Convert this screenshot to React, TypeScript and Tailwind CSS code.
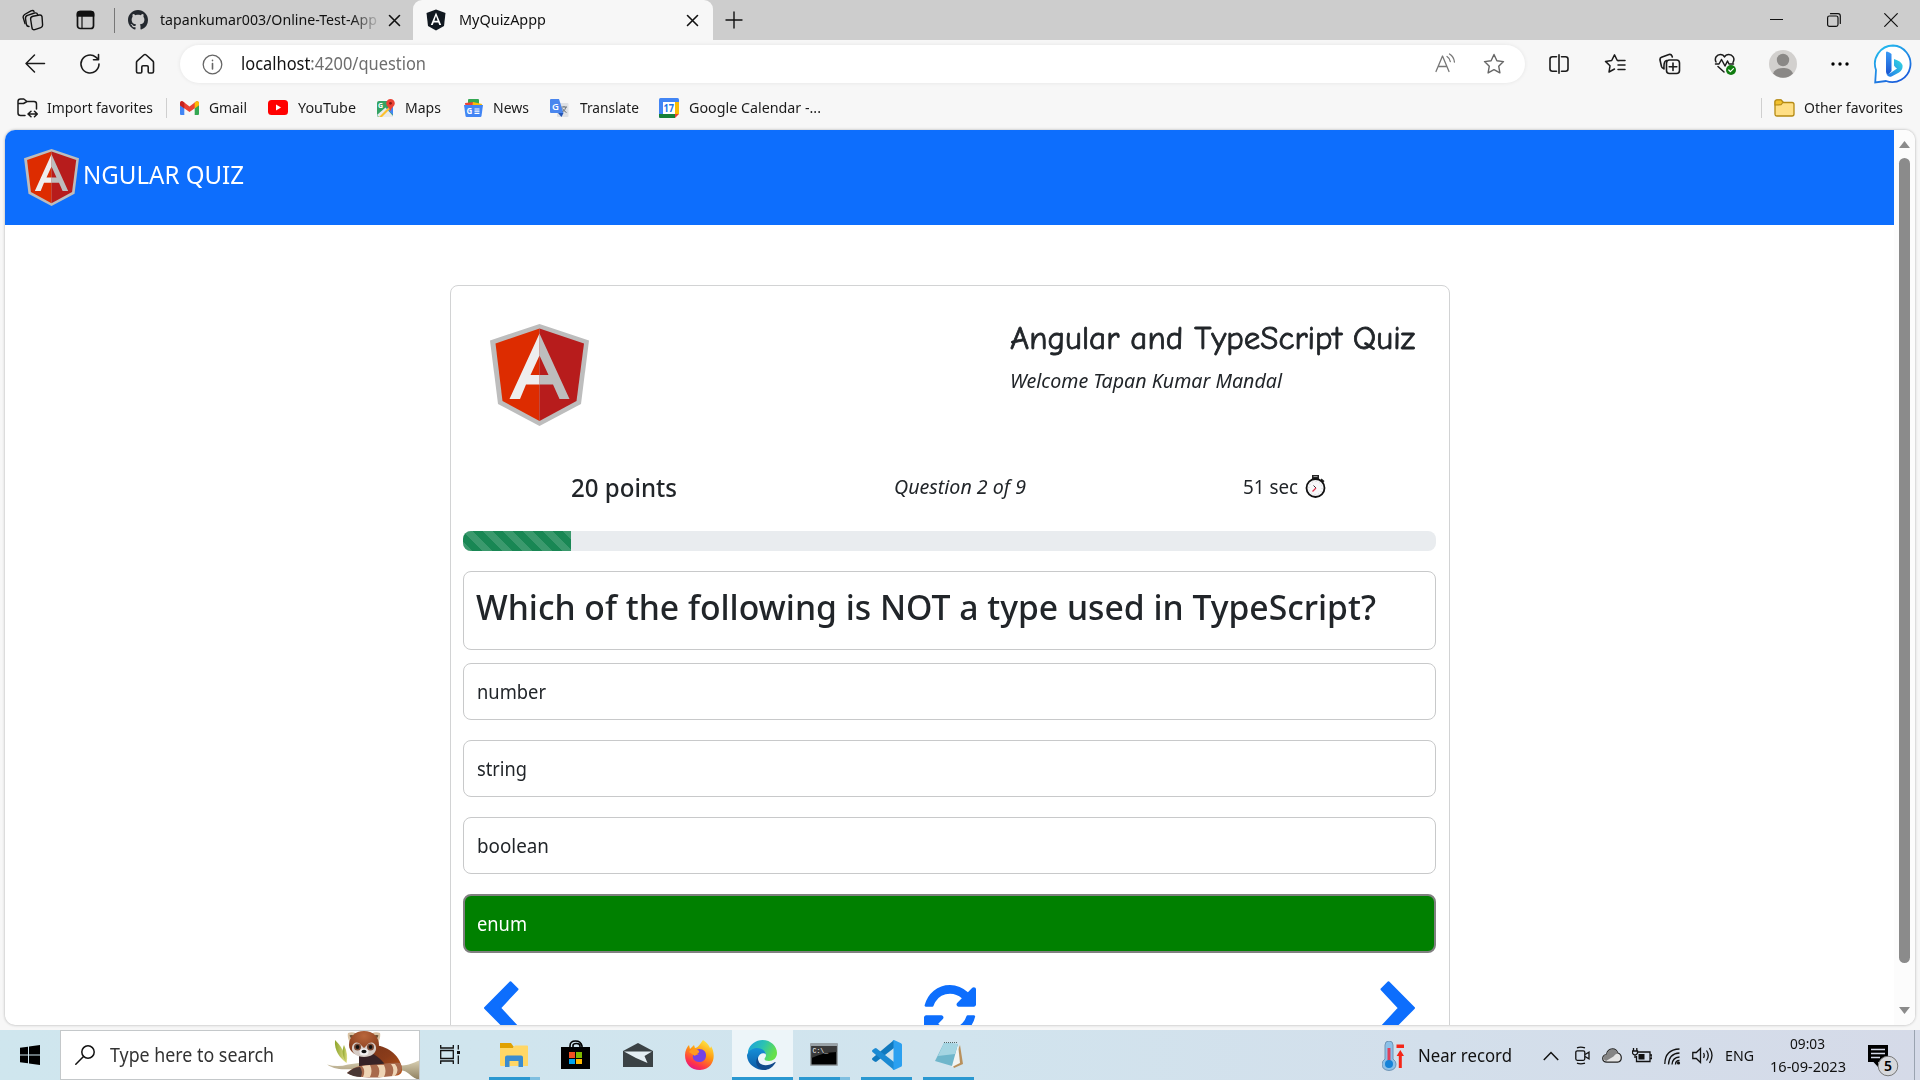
import { useLayoutEffect, useRef, type ReactNode } from "react";

/* A single line of text stretched to an exact advance width. */
function Fit({ w, className = "", children }: { w: number; className?: string; children: ReactNode }) {
  const ref = useRef<HTMLSpanElement>(null);
  useLayoutEffect(() => {
    const el = ref.current;
    if (!el) return;
    el.style.transform = "none";
    const natural = el.getBoundingClientRect().width;
    el.style.transform = `scaleX(${w / natural})`;
  }, [w]);
  return (
    <span className={`block shrink-0 ${className}`} style={{ width: w }}>
      <span ref={ref} className="inline-block origin-left whitespace-nowrap">
        {children}
      </span>
    </span>
  );
}

const line = { fill: "none", stroke: "currentColor", strokeLinecap: "round", strokeLinejoin: "round" } as const;

function AngularLogo({ className }: { className: string }) {
  return (
    <svg className={className} viewBox="0 0 99 102" preserveAspectRatio="none">
      <path d="M49.5 0 0 16.5 8 80 49.5 102 91 80 99 16.5Z" fill="#bdbdbd" />
      <path d="M49.5 4.5 5.5 19.5 12.5 77 49.5 97Z" fill="#dd2c00" />
      <path d="M49.5 4.5 94 19.5 86.500 77 49.5 97Z" fill="#b71c1c" />
      <path d="M49.5 9.500 19.500 75H30l6-14.500H49.500V51H40.500l9-19.500Z" fill="#eeeeee" />
      <path d="M49.500 9.500 79.500 75H69.500L63 60.500H49.500V51H58.500l-9-19.500Z" fill="#bdbdbd" />
    </svg>
  );
}

function TabStrip() {
  return (
    <div className="flex h-10 items-end bg-[#cdcdcd] text-[15px] leading-5 text-[#111]">
      <svg className="mb-[9px] ml-[22px] size-[22px] shrink-0" viewBox="0 0 22 22" {...line} strokeWidth="1.400">
        <path d="M11 7.200 17.500 6q2-.3 2.500 1.500l.6 8.500q0 2-1.800 2.600l-6 2q-2.300.6-2.800-1.600L8.600 10q-.2-2.200 2.400-2.800Z" />
        <path d="M7 17.500c-1.500 0-2.300-.8-2.600-2L3.500 9.500c-.2-1.700.6-2.700 2-3.200L12.500 4c1.600-.4 2.800.2 3.200 1.700" />
        <path d="M3 14.500 1.200 8.600C.9 7.300 1.400 6.400 2.600 5.500L9 1.800c1.500-.7 2.500-.4 3 .6" />
      </svg>
      <svg className="mb-[10px] ml-[32px] size-[20px] shrink-0" viewBox="0 0 20 20" {...line} strokeWidth="1.700">
        <rect x="1.500" y="1.500" width="16" height="17" rx="2.800" />
        <path d="M1.500 3.500q0-2 2.500-2h11q2.500 0 2.500 2V6h-16Z" fill="currentColor" />
        <path d="M6 6.500v12" strokeWidth="1.200" />
      </svg>
      <div className="mb-[7px] ml-[18px] h-[25px] w-px shrink-0 bg-[#777]" />
      <svg className="mb-[10px] ml-[13px] size-5 shrink-0" viewBox="0 0 16 16" fill="#24292f">
        <path d="M8 0C3.580 0 0 3.580 0 8c0 3.540 2.290 6.530 5.470 7.590.4.070.55-.17.55-.38 0-.19-.01-.82-.01-1.490-2.010.37-2.530-.49-2.690-.94-.09-.23-.48-.94-.82-1.130-.28-.15-.68-.52-.01-.53.63-.01 1.080.58 1.230.82.72 1.210 1.870.87 2.330.66.070-.52.28-.87.51-1.070-1.780-.2-3.640-.89-3.640-3.950 0-.87.31-1.590.82-2.150-.08-.2-.36-1.020.08-2.120 0 0 .67-.21 2.200.82.64-.18 1.320-.27 2-.27s1.360.09 2 .27c1.530-1.040 2.200-.82 2.200-.82.44 1.100.16 1.920.08 2.120.51.56.82 1.270.82 2.150 0 3.070-1.870 3.750-3.650 3.950.29.25.54.73.54 1.480 0 1.070-.01 1.930-.01 2.200 0 .21.15.46.55.38A8.010 8.010 0 0 0 16 8c0-4.420-3.580-8-8-8Z" />
      </svg>
      <div className="mb-[11px] ml-3 [mask-image:linear-gradient(to_right,#000_88%,rgba(0,0,0,0.15))]">
        <Fit w={217}>tapankumar003/Online-Test-App</Fit>
      </div>
      <svg className="mb-[13px] ml-[11px] size-[13px] shrink-0" viewBox="0 0 13 13" {...line} strokeWidth="1.600">
        <path d="m1.500 1.500 10 10m0-10-10 10" />
      </svg>
      <div className="ml-[12px] flex h-10 w-[300px] shrink-0 items-end rounded-t-[9px] bg-[#f7f7f7]">
        <svg className="mb-[9px] ml-[13px] h-[22px] w-[20px] shrink-0" viewBox="0 0 20 22">
          <path d="m10 .5 9.500 3.500-1.500 13L10 21.500 2 17 .5 4Z" fill="#111820" />
          <path d="M10 3.500 4.800 16h1.900l1-2.600h4.600l1 2.600h1.900ZM10 7l1.600 4.700H8.400Z" fill="#fff" fillRule="evenodd" />
        </svg>
        <Fit w={87} className="mb-[11px] ml-[13px]">MyQuizAppp</Fit>
        <svg className="mb-[13px] ml-[140px] size-[13px] shrink-0" viewBox="0 0 13 13" {...line} strokeWidth="1.600">
          <path d="m1.500 1.500 10 10m0-10-10 10" />
        </svg>
      </div>
      <svg className="mb-[11px] ml-[12px] size-[18px] shrink-0" viewBox="0 0 18 18" {...line} strokeWidth="1.400">
        <path d="M9 1v16M1 9h16" />
      </svg>
      <div className="grow" />
      <svg className="mb-[14px] h-[13px] w-[13px] shrink-0" viewBox="0 0 13 13" {...line} strokeWidth="1.200">
        <path d="M0 6.500h13" />
      </svg>
      <svg className="mb-[13px] ml-[44px] size-[14px] shrink-0" viewBox="0 0 14 14" {...line} strokeWidth="1.200">
        <rect x=".6" y="3" width="10.400" height="10.400" rx="1.800" />
        <path d="M3.500.7H11q2.300 0 2.300 2.300v7.500" />
      </svg>
      <svg className="mb-[13px] ml-[43px] mr-[22px] size-[14px] shrink-0" viewBox="0 0 14 14" {...line} strokeWidth="1.200">
        <path d="m.7.7 12.600 12.600m0-12.600L.7 13.300" />
      </svg>
    </div>
  );
}

function Toolbar() {
  return (
    <div className="flex h-[48px] items-center text-[#1b1b1b]">
      <svg className="ml-[24px] size-[22px] shrink-0" viewBox="0 0 22 22" {...line} strokeWidth="1.500">
        <path d="M20.500 10.500H2m8.500-8.500L2 10.500 10.500 19" />
      </svg>
      <svg className="ml-[33px] size-[22px] shrink-0" viewBox="0 0 22 22" {...line} strokeWidth="1.600">
        <path d="M20 11a9 9 0 1 1-3.200-6.900L19.500 6.500M19.500 1.500v5.200h-5" />
      </svg>
      <svg className="ml-[33px] size-[22px] shrink-0" viewBox="0 0 22 22" {...line} strokeWidth="1.600">
        <path d="M2.500 9.500Q2.500 8.500 3.300 7.800L9.800 2q1.200-1 2.400 0l6.500 5.800q.8.700.8 1.700v9q0 1.500-1.500 1.500h-2.500q-1.300 0-1.300-1.300V14q0-1.200-1.200-1.200H9Q7.800 12.800 7.800 14v4.700Q7.800 20 6.500 20H4q-1.500 0-1.500-1.500Z" />
      </svg>
      <div className="ml-[24px] flex h-[38px] w-[1345px] shrink-0 items-center rounded-full bg-white shadow-[0_0_4px_rgba(0,0,0,0.08)]">
        <svg className="ml-[22px] size-[21px] shrink-0 text-[#666]" viewBox="0 0 21 21" {...line} strokeWidth="1.300">
          <circle cx="10.500" cy="10.500" r="9.300" />
          <path d="M10.500 9.500v5.500M10.500 6.200v.4" strokeWidth="1.600" />
        </svg>
        <Fit w={185} className="mb-[2px] ml-[18px] text-[18px] leading-6 text-[#6e6e6e]">
          <span className="text-[#111]">localhost</span>:4200/question
        </Fit>
        <div className="grow" />
        <svg className="mb-[2px] h-[20px] w-[21px] shrink-0 text-[#777]" viewBox="0 0 21 20" {...line} strokeWidth="1.300">
          <path d="m1 18.500L7.500 3 14 18.500M3.300 13.500h8.400M12 3.500c2 1.200 3 2.800 3.300 5M14.500 1c3 1.800 4.600 4.400 4.900 8" />
        </svg>
        <svg className="ml-[27px] mr-[20px] size-[22px] shrink-0 text-[#666]" viewBox="0 0 22 22" {...line} strokeWidth="1.400">
          <path d="m11 1.500 2.900 6.200 6.600.9-4.800 4.600 1.200 6.700-5.900-3.200-5.900 3.200 1.200-6.700L1.500 8.600l6.600-.9Z" />
        </svg>
      </div>
      <svg className="ml-[24px] h-[20px] w-[20px] shrink-0" viewBox="0 0 20 20" {...line} strokeWidth="1.600">
        <path d="M7.500 2.800h-4Q1 2.800 1 5.300v9.400q0 2.500 2.500 2.500h4M12.500 2.800h4Q19 2.800 19 5.300v9.400q0 2.500-2.500 2.500h-4M10 .8v18.400" />
      </svg>
      <svg className="ml-[35px] size-[22px] shrink-0" viewBox="0 0 22 22" {...line} strokeWidth="1.500">
        <path d="M15 7.700 13.300 7.500 10.500 1.800 7.700 7.500l-6.200.9L6 12.800 5 19l5.500-3M13.500 7.500H21M14 12h7M14 16.500h7" />
      </svg>
      <svg className="ml-[33px] size-[22px] shrink-0" viewBox="0 0 22 22" {...line} strokeWidth="1.600">
        <rect x="7.500" y="7" width="13" height="13.500" rx="3" />
        <path d="M14 10v7.500M10.200 13.800h7.600M4.500 15.500Q3 15 2.500 13.500L1 7Q.7 5 2.500 4.300L10 1.500q2.200-.5 3 1.500l.3 1M7.500 7.500Q4.500 8 5 16" />
      </svg>
      <svg className="ml-[33px] size-[22px] shrink-0" viewBox="0 0 22 22" {...line} strokeWidth="1.500">
        <path d="M2 9C0 5 3 1.500 6.300 1.500c2 0 3.600 1 4.200 2.500.7-1.500 2.400-2.500 4.300-2.500C18.300 1.500 21.500 5 19 9.500M1.500 11H5l2.500-4.500L11 13l2.500-5L15 11h4.500M4 13.500l6 5.500" />
        <circle cx="17" cy="17" r="5" fill="#107c10" stroke="none" />
        <path d="m14.800 17 1.600 1.600 3-3" stroke="#fff" strokeWidth="1.200" />
      </svg>
      <svg className="ml-[33px] size-[28px] shrink-0" viewBox="0 0 28 28">
        <circle cx="14" cy="14" r="14" fill="#d2d0ce" />
        <circle cx="14" cy="10" r="6.200" fill="#8a8886" />
        <path d="M4 23.500C6 19 10 18 14 18s8 1 10 5.500A14 14 0 0 1 4 23.500Z" fill="#8a8886" />
      </svg>
      <svg className="ml-[34px] h-[4px] w-[18px] shrink-0" viewBox="0 0 18 4">
        <circle cx="2" cy="2" r="1.700" />
        <circle cx="9" cy="2" r="1.700" />
        <circle cx="16" cy="2" r="1.700" />
      </svg>
      <svg className="ml-[24px] size-[40px] shrink-0" viewBox="0 0 40 40">
        <defs>
          <linearGradient id="bingRing" x1="0" y1="0" x2=".6" y2="1">
            <stop offset="0" stopColor="#25c5f0" />
            <stop offset="1" stopColor="#1b5fdc" />
          </linearGradient>
          <linearGradient id="bingStem" x1="0" y1="0" x2="0" y2="1">
            <stop offset="0" stopColor="#3a9cf6" />
            <stop offset="1" stopColor="#1a55d0" />
          </linearGradient>
          <linearGradient id="bingBowl" x1="0" y1="1" x2="1" y2="0">
            <stop offset="0" stopColor="#2277ea" />
            <stop offset="1" stopColor="#35dbe0" />
          </linearGradient>
        </defs>
        <path d="M20 1.500A18.300 18.300 0 1 1 13 37L2.200 38.500 3 26A18.300 18.300 0 0 1 20 1.500Z" fill="#fff" stroke="url(#bingRing)" strokeWidth="1.800" />
        <path d="M14 7.500q3.500 1 4.500 2.500V27q-2.500 3.500-4.500 3.500-1-1.500-1-3V8.500q0-1 1-1Z" fill="url(#bingStem)" />
        <path d="M21 15q7 2 8.500 6 .8 5-3.500 7.500l-7 3.800q-4 1.700-5.500-2.300 1.500.5 4-1l6.500-4.500q-2-1-3-3Z" fill="url(#bingBowl)" />
      </svg>
    </div>
  );
}

function GmailIcon() {
  return (
    <svg className="h-[14px] w-[19px]" viewBox="0 0 19 14">
      <path d="M0 2v11q0 1 1 1h3.300V5Z" fill="#4285f4" />
      <path d="M19 2v11q0 1-1 1h-3.300V5Z" fill="#34a853" />
      <path d="M0 2Q.5-.5 3 .5l6.500 5 6.500-5Q18.500-.5 19 2v2.200L9.500 11 0 4.200Z" fill="#ea4335" />
      <path d="M0 4.200V2Q.3 0 2 0l2.300 1.500v6Z" fill="#c5221f" />
      <path d="M19 4.200V2Q18.700 0 17 0l-2.300 1.500v6Z" fill="#fbbc04" />
    </svg>
  );
}
function YouTubeIcon() {
  return (
    <svg className="h-[15px] w-[20px]" viewBox="0 0 20 15">
      <rect width="20" height="15" rx="3.500" fill="#f00" />
      <path d="m8 4.500 5 3-5 3Z" fill="#fff" />
    </svg>
  );
}
function MapsIcon() {
  return (
    <svg className="h-[18px] w-[18px]" viewBox="0 0 18 18">
      <rect y="2" width="16" height="16" rx="2" fill="#34a363" />
      <path d="m0 16 8.500-7.500L16 17v1H2Z" fill="#e8eaed" />
      <path d="m9.500 9.500 6.500 6.500V7Z" fill="#4285f4" />
      <path d="M2 18 16 4v3L5 18Z" fill="#fbc02d" />
      <text x="1" y="9" fontSize="7" fill="#fff" fontFamily="Open Sans" fontWeight="700">G</text>
      <path d="M13.500 0a4.300 4.300 0 0 1 4.300 4.300c0 3-3.300 4-4.300 8-1-4-4.300-5-4.300-8A4.300 4.300 0 0 1 13.500 0Z" fill="#ea4335" />
      <circle cx="13.500" cy="4.300" r="1.400" fill="#8c1b13" />
    </svg>
  );
}
function NewsIcon() {
  return (
    <svg className="h-[18px] w-[19px]" viewBox="0 0 19 18">
      <rect x="4" width="11" height="8" rx="1" fill="#34a853" />
      <path d="m1 4 9-1 1 6-9 2Z" fill="#ea4335" />
      <path d="m9 3 9 2-1 5-9-1Z" fill="#fbbc04" />
      <path d="M0 6h19l-1.500 11q-.2 1-1.200 1H2.700q-1 0-1.200-1Z" fill="#4285f4" />
      <text x="2.500" y="15" fontSize="8" fill="#fff" fontFamily="Open Sans" fontWeight="700">G</text>
      <path d="M10.500 10h5M10.500 12.200h5M10.500 14.400h5" stroke="#fff" strokeWidth="1.200" />
    </svg>
  );
}
function TranslateIcon() {
  return (
    <svg className="h-[18px] w-[19px]" viewBox="0 0 19 18">
      <rect x="7" y="4" width="11.500" height="14" rx="1" fill="#dfe1e5" />
      <path d="M1 0h8l4.500 14H1q-1 0-1-1V1q0-1 1-1Z" fill="#4a86ee" />
      <path d="m8 14 3.500 4 2-4Z" fill="#2456b5" />
      <text x="2" y="10.500" fontSize="9.500" fill="#fff" fontFamily="Open Sans" fontWeight="600">G</text>
      <path d="M11.500 8h5.500M14 7v1M16 8q-.8 3-3.500 5M12.500 9.500q1.500 3 4 4" fill="none" stroke="#687178" />
    </svg>
  );
}
function CalendarIcon() {
  return (
    <svg className="size-[20px]" viewBox="0 0 20 20">
      <path d="M1.500 0h17Q20 0 20 1.500V15l-5 5H1.500Q0 20 0 18.500v-17Q0 0 1.500 0Z" fill="#4285f4" />
      <path d="M16 4h4v12h-4Z" fill="#fbbc04" />
      <path d="M0 16h16v4H1.500Q0 20 0 18.500Z" fill="#188038" />
      <path d="M16 16h4l-4 4Z" fill="#ea4335" />
      <path d="M4 4h12v12H4Z" fill="#fff" />
      <text x="4.600" y="14" fontSize="10" fill="#1a73e8" fontFamily="Open Sans" fontWeight="700" textLength="10.500" lengthAdjust="spacingAndGlyphs">17</text>
    </svg>
  );
}

function FavoritesBar() {
  return (
    <div className="flex h-[42px] items-center pb-[3px] text-[15px] leading-5 text-[#1b1b1b]">
      <svg className="ml-[17px] size-[21px] shrink-0" viewBox="0 0 21 21" {...line} strokeWidth="1.500">
        <path d="M8 18.500H3.500Q1 18.500 1 16V4.500Q1 2 3.500 2h3.300L10 4.500h7q2.500 0 2.500 2.500v5M1 6.500h5.500L10 4.500M11.500 17h8.500m-6-2.800L11 17l3 2.800m3.500-5.600L20.300 17l-2.800 2.800" />
      </svg>
      <Fit w={106} className="-mt-px ml-[9px]">Import favorites</Fit>
      <div className="ml-[13px] h-5 w-px shrink-0 bg-[#cfcfcf]" />
      <div className="ml-[13px] flex shrink-0 items-center gap-[10px]"><GmailIcon /><Fit w={38} className="-mt-px">Gmail</Fit></div>
      <div className="ml-[21px] flex shrink-0 items-center gap-[10px]"><YouTubeIcon /><Fit w={58} className="-mt-px">YouTube</Fit></div>
      <div className="ml-[21px] flex shrink-0 items-center gap-[10px]"><MapsIcon /><Fit w={36} className="-mt-px">Maps</Fit></div>
      <div className="ml-[23px] flex shrink-0 items-center gap-[10px]"><NewsIcon /><Fit w={36} className="-mt-px">News</Fit></div>
      <div className="ml-[21px] flex shrink-0 items-center gap-[11px]"><TranslateIcon /><Fit w={59} className="-mt-px">Translate</Fit></div>
      <div className="ml-[20px] flex shrink-0 items-center gap-[10px]"><CalendarIcon /><Fit w={132} className="-mt-px">Google Calendar -...</Fit></div>
      <div className="grow" />
      <div className="h-5 w-px bg-[#cfcfcf]" />
      <svg className="ml-[12px] h-[18px] w-[21px] shrink-0" viewBox="0 0 21 18">
        <path d="M1 3q0-2 2-2h4l2.500 2.500H18q2 0 2 2V15q0 2-2 2H3q-2 0-2-2Z" fill="#ffdf85" stroke="#b58a12" strokeWidth="1.300" />
        <path d="M1 6V3q0-2 2-2h4l2 2.300L7 5.800Z" fill="#f2c12e" stroke="#b58a12" strokeWidth="1.100" />
      </svg>
      <Fit w={99} className="-mt-px ml-[9px] mr-[17px]">Other favorites</Fit>
    </div>
  );
}

function Stopwatch() {
  return (
    <svg className="h-[23px] w-[21px] shrink-0" viewBox="0 0 21 23">
      <path d="M7 0h7v4H7ZM16.500 3.500l3 2.500-1.500 2-3-2.500Z" fill="#222" />
      <path d="M8.500 1.500h4" stroke="#999" />
      <circle cx="10.500" cy="13" r="9" fill="#f7f7f9" stroke="#111" strokeWidth="1.800" />
      <circle cx="10.500" cy="13" r="6.600" fill="none" stroke="#c9c9c9" strokeDasharray=".8 2.650" />
      <path d="m8.500 10.500 2.500 2.500" stroke="#333" />
      <path d="m11 13-3.500 3.500" stroke="#e0304a" strokeWidth="1.200" />
    </svg>
  );
}

const options = [
  { label: "number", width: 69 },
  { label: "string", width: 50 },
  { label: "boolean", width: 72 },
];

function QuizCard() {
  return (
    <div className="ml-[445px] mt-[60px] h-[800px] w-[1000px] rounded-[8px] border border-[#d2d3d4] pl-3 pr-[13px] text-[#212529]">
      <div className="flex h-[165px] justify-between">
        <AngularLogo className="ml-[27px] mt-[38px] h-[102px] w-[99px]" />
        <div className="mr-[21px] mt-[30px]">
          <Fit w={405} className="font-['Comic_Sans_MS','Comic_Neue','Noto_Sans'] text-[33px] font-medium leading-[44px] [-webkit-text-stroke:0.8px_#212529]">
            Angular and TypeScript Quiz
          </Fit>
          <Fit w={272} className="mt-[6px] text-[20px] italic leading-[30px]">Welcome Tapan Kumar Mandal</Fit>
        </div>
      </div>
      <div className="flex h-[80px] items-start pt-[17px] leading-[38px]">
        <Fit w={106} className="ml-[108px] text-[25px] font-medium">20 points</Fit>
        <Fit w={132} className="ml-[217px] text-[20px] italic">Question 2 of 9</Fit>
        <Fit w={55} className="ml-[217px] text-[20px]">51 sec</Fit>
        <div className="ml-[7px] mt-[7px]"><Stopwatch /></div>
      </div>
      <div className="flex h-5 overflow-hidden rounded-[8px] bg-[#e9ecef]">
        <div className="w-[108px] bg-[#198754] bg-[linear-gradient(45deg,rgba(255,255,255,0.15)_25%,transparent_25%,transparent_50%,rgba(255,255,255,0.15)_50%,rgba(255,255,255,0.15)_75%,transparent_75%,transparent)] bg-[length:20px_20px]" />
      </div>
      <div className="mt-5 h-[79px] rounded-[8px] border border-[#c8c9ca] pl-[12px] pt-[12px]">
        <Fit w={900} className="text-[35px] font-medium leading-[46px]">
          Which of the following is NOT a type used in TypeScript?
        </Fit>
      </div>
      <div className="mt-[13px] flex flex-col gap-5">
        {options.map((o) => (
          <div key={o.label} className="flex h-[57px] items-center rounded-[8px] border border-[#c8c9ca] pl-[13px]">
            <Fit w={o.width} className="text-[20px] leading-[30px]">{o.label}</Fit>
          </div>
        ))}
        <div className="flex h-[59px] items-center rounded-[8px] border-2 border-[#808080] bg-[#008000] pl-[12px]">
          <Fit w={50} className="text-[20px] leading-[30px] text-white">enum</Fit>
        </div>
      </div>
      <div className="mt-[28px] flex items-start justify-between pl-[20px] pr-[20px] text-[#0d6efd]">
        <svg className="h-[54px] w-[36px]" viewBox="0 0 36 54" fill="currentColor" stroke="currentColor" strokeWidth="2" strokeLinejoin="round">
          <path d="M27.500 1.200 2 27l25.500 25.800 7-7L17 27 34.500 8.200Z" />
        </svg>
        <svg className="mt-[4px] size-[52px]" viewBox="0 128 1536 1536" fill="currentColor">
          <path d="M1511 1056q0 5-1 7-64 268-268 434.500t-478 166.500q-146 0-282.500-55t-243.500-157l-129 129q-19 19-45 19t-45-19-19-45v-448q0-26 19-45t45-19h448q26 0 45 19t19 45-19 45l-137 137q71 66 161 102t187 36q134 0 250-65t186-179q11-17 53-117 8-23 30-23h192q13 0 22.500 9.500t9.500 22.500zm25-800v448q0 26-19 45t-45 19h-448q-26 0-45-19t-19-45 19-45l138-138q-148-137-349-137-134 0-250 65t-186 179q-11 17-53 117-8 23-30 23h-199q-13 0-22.500-9.500t-9.500-22.500v-7q65-268 270-434.500t480-166.500q146 0 284 55.500t245 156.500l130-129q19-19 45-19t45 19 19 45z" />
        </svg>
        <svg className="h-[54px] w-[36px]" viewBox="0 0 36 54" fill="currentColor" stroke="currentColor" strokeWidth="2" strokeLinejoin="round">
          <path d="M8.500 1.200 34 27 8.500 52.800l-7-7L19 27 1.500 8.200Z" />
        </svg>
      </div>
    </div>
  );
}

function PageView() {
  return (
    <div className="ml-[5px] flex h-[895px] w-[1910px] overflow-hidden rounded-[10px] bg-white shadow-[0_0_3px_rgba(0,0,0,0.3)]">
      <div className="w-[1889px] shrink-0 overflow-hidden">
        <div className="flex h-[95px] items-center bg-[#0d6efd]">
          <AngularLogo className="ml-[19px] h-[57px] w-[55px]" />
          <Fit w={161} className="mb-[7px] ml-[4px] text-[25px] leading-[38px] text-white">NGULAR QUIZ</Fit>
        </div>
        <QuizCard />
      </div>
      <div className="flex w-[21px] flex-col items-center bg-[#fcfcfc] pr-px">
        <svg className="mt-[11px] h-[7px] w-[11px]" viewBox="0 0 11 7"><path d="M0 7 5.500 0 11 7Z" fill="#8b8b8b" /></svg>
        <div className="mt-[10px] h-[805px] w-[11px] rounded-full bg-[#8b8b8b]" />
        <svg className="mt-[44px] h-[7px] w-[11px]" viewBox="0 0 11 7"><path d="m0 0 5.500 7L11 0Z" fill="#8b8b8b" /></svg>
      </div>
    </div>
  );
}

function RedPanda() {
  return (
    <svg className="h-[48px] w-[92px] shrink-0" viewBox="0 0 92 48">
      <defs>
        <linearGradient id="fur" x1="0" y1="0" x2="1" y2="1">
          <stop offset="0" stopColor="#7a3418" />
          <stop offset=".5" stopColor="#8a3c1a" />
          <stop offset="1" stopColor="#bd5516" />
        </linearGradient>
        <radialGradient id="face" cx=".5" cy=".2" r=".8">
          <stop offset="0" stopColor="#b9663b" />
          <stop offset="1" stopColor="#7c3416" />
        </radialGradient>
        <linearGradient id="branch" x1="0" y1="0" x2="0" y2="1">
          <stop offset="0" stopColor="#d8cfb2" />
          <stop offset="1" stopColor="#8f8060" />
        </linearGradient>
        <linearGradient id="leaf" x1="0" y1="0" x2="1" y2="0">
          <stop offset="0" stopColor="#8ea52c" />
          <stop offset="1" stopColor="#e3e08a" />
        </linearGradient>
      </defs>
      <path d="M0 33.500c7 2 14 2 21 0l22-3 32 4c6 0 12-3 17-5v19c-8-1-10-9-18-9l-40-1c-12-1-24 2-34-5Z" fill="url(#branch)" />
      <path d="M8 9c6 6 10 12 11.500 23C13 27 7 20 8 9Z" fill="url(#leaf)" />
      <path d="M17 14c3 6 4 12 2.500 18-4-6-5-12-2.500-18Z" fill="url(#leaf)" />
      <path d="M48 14c14 2 26 11 27 25 0 6-8 7-16 5L38 36C34 30 35 22 48 14Z" fill="url(#fur)" />
      <path d="M32 23c10-5 20 2 27 12l-3 6-24-6Z" fill="#372226" />
      <path d="M20 42c6-6 14-8 22-8 12 0 22-3 31-2 4 4 1 12-7 13-14 2-34 3-46-3Z" fill="#a8694c" />
      <path d="M35 35q4 5 1 11h7q3-6 0-12ZM50 34q4 5 1 12h6q3-6 0-12ZM64 33q4 5 1 12h3q5-6 0-12Z" fill="#eed4b5" />
      <path d="M20 42c5-4 8-6 13-6q3 4 1 10-8 0-14-4Z" fill="#4a3835" />
      <path d="M21 2c5-2 9 0 11 4l-6 8c-4-2-6-8-5-12ZM53 2c-5-2-9 0-11 4l6 8c4-2 6-8 5-12Z" fill="#d9c3a4" />
      <path d="M22.500 4.500c3-1 5 0 7 2l-4 4ZM51.500 4.500c-3-1-5 0-7 2l4 4Z" fill="#6b5238" />
      <path d="M37 0c9 0 15 6 15 14 0 7-7 11-15 11s-15-4-15-11C22 6 28 0 37 0Z" fill="url(#face)" />
      <path d="M25 16c1-5 6-6 9-2l3 3 3-3c3-4 8-3 9 2 1 6-5 10-12 10s-13-4-12-10Z" fill="#d6ccc6" />
      <circle cx="30.500" cy="16" r="3.500" fill="#7b4a35" />
      <circle cx="43.500" cy="16" r="3.500" fill="#7b4a35" />
      <circle cx="30.500" cy="16" r="1.900" fill="#111" />
      <circle cx="43.500" cy="16" r="1.900" fill="#111" />
      <ellipse cx="37" cy="21" rx="4.500" ry="3.500" fill="#f1eeee" />
      <ellipse cx="37" cy="20.500" rx="2.600" ry="1.800" fill="#111" />
    </svg>
  );
}

const apps: { key: string; strip: string; cell: string; tail?: boolean; running: boolean; icon: ReactNode }[] = [
  {
    key: "explorer", cell: "ml-[29px] w-[51px]", strip: "w-[41px]", tail: true, running: true,
    icon: (
      <svg className="mr-[2px] h-[24px] w-[28px]" viewBox="0 0 28 24">
        <path d="M0 0h11l2.500 3.500V8H0Z" fill="#e0a100" />
        <path d="M0 5h13l2-2.500h12q1 0 1 1V23H1q-1 0-1-1Z" fill="#ffd766" />
        <path d="M5 24V14.500q0-2 2-2h14q2 0 2 2V24h-4.500v-6h-9v6Z" fill="#3a8cd0" />
      </svg>
    ),
  },
  {
    key: "store", cell: "ml-[10px] w-[51px]", strip: "", running: false,
    icon: (
      <svg className="h-[29px] w-[29px]" viewBox="0 0 29 29">
        <path d="M9 10V6q0-5 5.500-5T21 6v4M12 7V5.500q0-2 3.500-2T19 6v3" fill="none" stroke="#000" strokeWidth="1.600" />
        <path d="M0 7h29v22H0Z" />
        <path d="M8 12h6v6H8Z" fill="#f25022" /><path d="M15 12h6v6h-6Z" fill="#7fba00" />
        <path d="M8 19h6v5H8Z" fill="#00a4ef" /><path d="M15 19h6v5h-6Z" fill="#ffb900" />
      </svg>
    ),
  },
  {
    key: "mail", cell: "ml-[11px] w-[51px]", strip: "", running: false,
    icon: (
      <svg className="h-[24px] w-[30px]" viewBox="0 0 30 24">
        <path d="M0 8 15 0l15 8v16H0Z" fill="#3b4245" />
        <path d="m1 8.500 28 0-7.500 4.500 3 7L13 15Z" fill="#e4eef3" />
      </svg>
    ),
  },
  {
    key: "firefox", cell: "ml-[11px] w-[51px]", strip: "", running: false,
    icon: (
      <svg className="h-[30px] w-[29px]" viewBox="0 0 29 30">
        <defs>
          <linearGradient id="fox" x1=".8" y1="0" x2=".3" y2="1">
            <stop offset="0" stopColor="#fff04a" /><stop offset=".45" stopColor="#ff980e" />
            <stop offset=".8" stopColor="#ff3647" /><stop offset="1" stopColor="#e31587" />
          </linearGradient>
        </defs>
        <path d="M18 0c4 3 6 5 7 8 1-.5 1-1.500 1-2 5 8 4 23-11 24C6 30 0 24 0 15c0-4 2-8 4-10l1 4 4-4 1 3c3 0 5-4 8-8Z" fill="url(#fox)" />
        <path d="M14.500 9c4 0 7 3 6.500 7-.5 4-3 6-7 6-4 0-7-3-6-7h6q-3-1-5-3 2-3 5.500-3Z" fill="#7542e5" />
        <path d="M4 12c3-4 7-4 10-1 1 2-3 3-4 5Z" fill="#ff9a1f" />
      </svg>
    ),
  },
  {
    key: "edge", cell: "ml-[7px] w-[61px] bg-[#edf5f9]", strip: "grow", running: true,
    icon: (
      <svg className="mr-px size-[30px]" viewBox="0 0 30 30">
        <defs>
          <linearGradient id="edgeTop" x1="0" y1="0" x2="1" y2=".4">
            <stop offset="0" stopColor="#1b9de2" /><stop offset=".55" stopColor="#2cc3b0" /><stop offset="1" stopColor="#66e04a" />
          </linearGradient>
          <linearGradient id="edgeLow" x1="0" y1="0" x2="0" y2="1">
            <stop offset="0" stopColor="#1690d8" /><stop offset="1" stopColor="#0c59a4" />
          </linearGradient>
        </defs>
        <path d="M1 11C3 4 9 0 15.500 0 24 0 30 6.500 30 13c0 5-4 8-8 8-3 0-4.500-1-4.500-2s1.500-1.500 1.500-4c0-3-3-5-7-5-4 0-8 2-10.800 6Z" fill="url(#edgeTop)" />
        <path d="M0 15C2 10 6 8 10 8c5 0 8.500 3 9 6.500C17 12 12 13 11 18c-.5 6 4 10 9 11.200C17 30.500 11 30 7 27 2 24 0 19 0 15Z" fill="url(#edgeLow)" />
        <path d="M11 17c-1 8 8 11 17 5 1 0 .5 1 0 1.500C25 28 21 30 17 30 10 29 7 22 11 17Z" fill="#114a8b" />
      </svg>
    ),
  },
  {
    key: "cmd", cell: "ml-[6px] w-[51px]", strip: "w-[41px]", tail: true, running: true,
    icon: (
      <svg className="mr-[2px] h-[23px] w-[28px]" viewBox="0 0 28 23">
        <rect width="28" height="23" rx="1" fill="#9aa3a8" />
        <path d="M1.500 3h25v18.500h-25Z" />
        <path d="M1.500 3h25v6Q14 9 1.500 15Z" fill="#3a3a3a" />
        <text x="2.500" y="9.500" fontSize="6.500" fill="#fff" fontFamily="Liberation Mono">C:\_</text>
      </svg>
    ),
  },
  {
    key: "code", cell: "ml-[11px] w-[51px]", strip: "grow", running: true,
    icon: (
      <svg className="size-[30px]" viewBox="0 0 30 30">
        <path d="M22 0v8L4 22l-1.500-.5L.5 20q-1-1 0-2Z" fill="#1079be" />
        <path d="M22 30v-8L4 8l-1.500.5L.5 10q-1 1 0 2Z" fill="#1b8ad3" />
        <path d="m22 0 7 3.200q1 .5 1 1.500v20.600q0 1-1 1.500L22 30q-1 0-1.500-.8.500.3 1-.7V1.500q-.5-1-1-.7Q21 0 22 0Z" fill="#2ba0f0" />
      </svg>
    ),
  },
  {
    key: "notepad", cell: "ml-[11px] w-[51px]", strip: "grow", running: true,
    icon: (
      <svg className="h-[26px] w-[28px]" viewBox="0 0 28 26">
        <path d="m25 3 3 19-9 4-2-4Z" fill="#b9905c" />
        <path d="m23 2 2 19-8 4-2-3Z" fill="#f2f4f2" />
        <path d="M9 1 23 2l-6 22L0 19Z" fill="#6fb6cb" />
        <path d="M9 1 23 2l-3 10L3 14Z" fill="#a5d5e2" />
        <path d="M9 .5h14" stroke="#566" strokeDasharray="1 1" />
      </svg>
    ),
  },
];

function Taskbar() {
  return (
    <div className="mt-[5px] flex h-[50px] items-stretch bg-gradient-to-r from-[#cfe6ee] via-[#d1e4ee] to-[#d5dae8] text-[#111]">
      <div className="flex w-[60px] shrink-0 items-center justify-center">
        <svg className="size-5" viewBox="0 0 20 20">
          <path d="M0 2.800 8 1.700V9.500H0ZM9 1.500 20 0v9.500H9ZM0 10.500h8v7.800L0 17.200ZM9 10.500h11V20L9 18.500Z" />
        </svg>
      </div>
      <div className="flex w-[360px] shrink-0 items-center border border-[#c4c8ca] bg-white">
        <svg className="ml-[14px] size-[20px] shrink-0" viewBox="0 0 20 20" {...line} strokeWidth="1.500">
          <circle cx="13" cy="7" r="6.200" /><path d="M8.500 11.500.8 19.200" />
        </svg>
        <Fit w={164} className="ml-[15px] text-[19px] leading-6 text-[#333]">Type here to search</Fit>
        <div className="grow" />
        <RedPanda />
      </div>
      <svg className="ml-[20px] mt-[15px] h-[19px] w-[20px] shrink-0" viewBox="0 0 20 19" fill="none" stroke="#111" strokeWidth="1.300">
        <path d="M.7 0v3h12.600V0M.7 19v-3h12.600v3M.7 5.500h12.600v8H.7ZM18.300 0v4.500M18.300 10.500V19" />
        <path d="M17 6h3v3h-3Z" fill="#111" stroke="none" />
      </svg>
      {apps.map((a) => (
        <div key={a.key} className={`flex shrink-0 flex-col ${a.cell}`}>
          <div className="flex h-[47px] items-center justify-center pt-[2px]">{a.icon}</div>
          {a.running && (
            <div className="flex h-[3px]">
              <div className={`bg-[#2a98d1] ${a.strip}`} />
              {a.tail && <div className="grow bg-[#7fbfe0]" />}
            </div>
          )}
        </div>
      ))}
      <div className="grow" />
      <svg className="mt-[11px] h-[30px] w-[23px] shrink-0" viewBox="0 0 23 30">
        <path d="M3 4q0-4 4-4t4 4v14q3 2 3 5 0 6-7 6.500Q0 29 0 23q0-3 3-5Z" fill="#8cc0e8" stroke="#7095b5" />
        <path d="M7 7v13" stroke="#e0405a" strokeWidth="3" />
        <circle cx="7" cy="23" r="4" fill="#1583d8" />
        <path d="M14.500 3.500H22V7h-7.500ZM18.300 9l3.700 6h-2.200v12h-3V15h-2.200Z" fill="#f52618" />
      </svg>
      <Fit w={94} className="ml-[13px] mt-[13px] text-[18px] leading-6">Near record</Fit>
      <svg className="ml-[31px] mt-[21px] h-[10px] w-[16px] shrink-0" viewBox="0 0 16 10" fill="none" stroke="#111" strokeWidth="1.500"><path d="m.8 9 7.200-7.500L15.200 9" /></svg>
      <svg className="ml-[16px] mt-[16px] h-[19px] w-[15px] shrink-0" viewBox="0 0 15 19" fill="none" stroke="#111" strokeWidth="1.300">
        <rect x=".8" y="4.800" width="9" height="9.500" rx="1.500" /><path d="m10 8.500 4-2.300v6.600l-4-2.300M2 1.800q3.500-1.500 8 0M2 17.200q3.500 1.500 8 0" />
      </svg>
      <svg className="ml-[12px] mt-[18px] h-[15px] w-[20px] shrink-0" viewBox="0 0 20 15">
        <path d="M5 14.200Q.7 14 .7 10.300.8 7 4.500 6.500 5.500 1 10.500.8q4 .2 5.300 4.200Q19.300 6 19.300 9.800T15.500 14.200Z" fill="#e5e5e5" stroke="#222" strokeWidth="1.200" />
        <path d="M1.300 11Q1.500 7 4.500 6.500 6 1.300 10.500 1.300q4 .2 5.300 4Q13 6 11.500 8.500L4 13Z" fill="#858585" />
      </svg>
      <svg className="ml-[10px] mt-[18px] h-[15px] w-[20px] shrink-0" viewBox="0 0 20 15" fill="none" stroke="#111" strokeWidth="1.300">
        <path d="M6 4h12v9.500H4.500V8M18.500 7h1.500v3.500h-1.500M1.500 0v2.500M4.800 0v2.500M.5 3h5v2q-.5 2-2.500 2T.5 5ZM3 7v3" /><path d="M6.500 6h6v5.500h-6Z" fill="#111" stroke="none" />
      </svg>
      <svg className="ml-[12px] mt-[18px] h-[17px] w-[17px] shrink-0" viewBox="0 0 17 17" fill="none" stroke="#111" strokeWidth="1.300">
        <path d="M.8 16Q1 1.500 15.500 1M4.500 16.500Q5 5.500 15.500 5M8 16.500Q8.500 9.500 15.500 9M11.500 16.500q0-4 4-4" /><circle cx="14.500" cy="15" r="1.600" fill="#111" stroke="none" />
      </svg>
      <svg className="ml-[11px] mt-[17px] h-[17px] w-[21px] shrink-0" viewBox="0 0 21 17" fill="none" stroke="#111" strokeWidth="1.300">
        <path d="M.8 5.500h3.500L8.500 1.500v14l-4.200-4H.8ZM11.500 6q1.500 2.500 0 5M14.500 3.500q3.500 5 0 10M17.500 1q5 7.500 0 15" />
      </svg>
      <Fit w={29} className="ml-[12px] mt-[15px] text-[15px] leading-5">ENG</Fit>
      <div className="ml-[16px] mt-[2px] flex w-[76px] shrink-0 flex-col items-center text-[15px] leading-[23px]">
        <Fit w={35} className="mr-[2px]">09:03</Fit>
        <Fit w={76}>16-09-2023</Fit>
      </div>
      <svg className="ml-[22px] mr-[15px] mt-[14px] h-[34px] w-[31px] shrink-0" viewBox="0 0 31 34">
        <path d="M0 1h20v17H10v5l-4.500-5H0Z" />
        <path d="M3 5.500h14M3 9.500h14M3 13.500h9" stroke="#d5dae8" strokeWidth="1.500" />
        <circle cx="20" cy="22" r="9.800" fill="#d6d8dc" stroke="#777" />
        <text x="20" y="26.800" fontSize="14" fontWeight="600" textAnchor="middle" fontFamily="Noto Sans">5</text>
      </svg>
      <div className="mr-[5px] w-px bg-[#9aa3b0]" />
    </div>
  );
}

export default function App() {
  return (
    <div className="h-[1080px] w-[1920px] overflow-hidden bg-[#f7f7f7] font-['Segoe_UI','Noto_Sans',sans-serif]">
      <TabStrip />
      <Toolbar />
      <FavoritesBar />
      <PageView />
      <Taskbar />
    </div>
  );
}
